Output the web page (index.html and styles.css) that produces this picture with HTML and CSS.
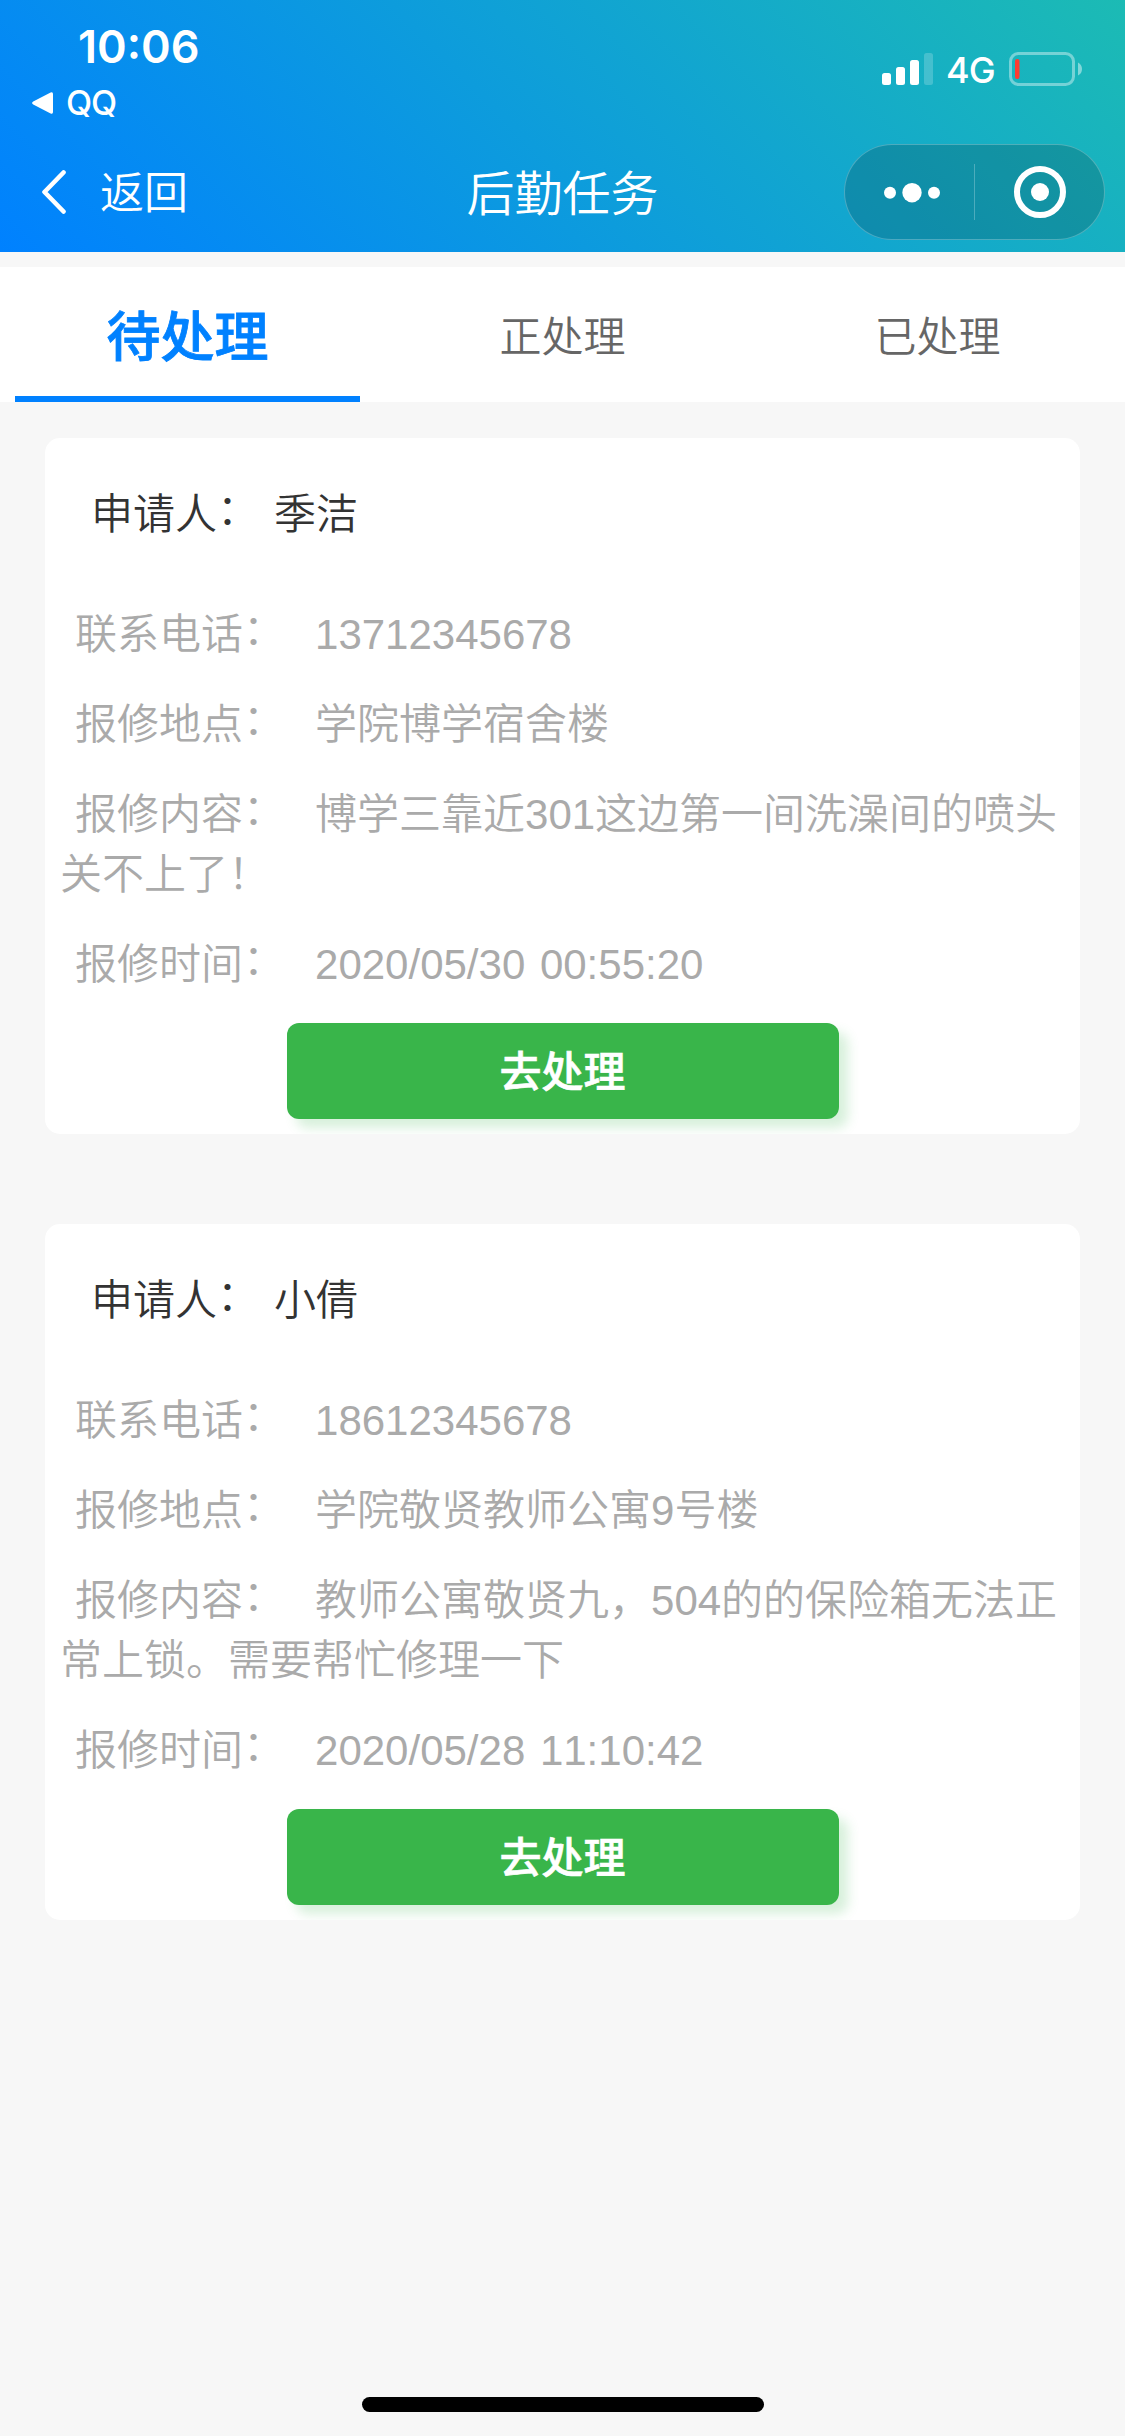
FILE: index.html
```html
<!DOCTYPE html>
<html lang="zh-CN">
<head>
<meta charset="utf-8">
<title>后勤任务</title>
<link rel="stylesheet" href="styles.css">
</head>
<body>
<div class="page">
  <header class="header">
    <div class="status">
      <div class="status-left">
        <div class="time">10:06</div>
        <div class="return-app">
          <svg width="21" height="22" viewBox="0 0 21 22"><path d="M1.2 9.600 18.600.6Q21-.4 21 2v18q0 2.400-2.400 1.400L1.200 12.400q-2.200-1.400 0-2.800z" fill="#fff"/></svg>
          <span class="app-name">QQ</span>
        </div>
      </div>
      <div class="status-right">
        <svg class="signal" width="51" height="34" viewBox="0 0 51 34" fill="#fff"><rect y="21" width="9" height="12" rx="2.500"/><rect x="14" y="15" width="9" height="18" rx="2.500"/><rect x="28" y="8" width="9" height="25" rx="2.500"/><rect x="42" y="1" width="9" height="32" rx="2.500" opacity=".2"/></svg>
        <span class="network">4G</span>
        <svg class="battery" width="74" height="34" viewBox="0 0 74 34"><rect x="1.500" y="1.500" width="63" height="31" rx="8" fill="none" stroke="#fff" stroke-opacity=".4" stroke-width="3"/><path d="M69 10.500q4 2 4 6.500t-4 6.500z" fill="#fff" opacity=".45"/><rect x="6" y="7" width="4.500" height="20" rx="2" fill="#ff3b30"/></svg>
      </div>
    </div>
    <nav class="nav">
      <a class="back">
        <svg width="26" height="44" viewBox="0 0 26 44"><path d="M22.500 2.500 3.500 22l19 19.500" fill="none" stroke="#fff" stroke-width="4.600" stroke-linecap="round" stroke-linejoin="round"/></svg>
        <span class="back-text">返回</span>
      </a>
      <h1 class="title">后勤任务</h1>
      <div class="nav-right">
        <div class="capsule">
          <svg width="259" height="94" viewBox="0 0 259 94"><g fill="#fff"><circle cx="45" cy="47.700" r="6"/><circle cx="67" cy="47.700" r="9.700"/><circle cx="89" cy="47.700" r="6"/><circle cx="195" cy="47" r="9"/></g><path d="M129.500 19v56" stroke="#fff" stroke-opacity=".25"/><circle cx="195" cy="47" r="23" fill="none" stroke="#fff" stroke-width="6"/></svg>
        </div>
      </div>
    </nav>
  </header>

  <div class="tabs">
    <div class="tab tab-active">待处理</div>
    <div class="tab">正处理</div>
    <div class="tab">已处理</div>
  </div>

  <main class="list">
    <section class="card">
      <div class="applicant"><span>申请人<span class="colon">：</span></span><span>季洁</span></div>
      <p class="row"><span class="label">联系电话<span class="colon">：</span></span>13712345678</p>
      <p class="row"><span class="label">报修地点<span class="colon">：</span></span>学院博学宿舍楼</p>
      <p class="row"><span class="label">报修内容<span class="colon">：</span></span>博学三靠近301这边第一间洗澡间的喷头关不上了！</p>
      <p class="row"><span class="label">报修时间<span class="colon">：</span></span>2020/05/30 00:55:20</p>
      <button class="action">去处理</button>
    </section>
    <section class="card">
      <div class="applicant"><span>申请人<span class="colon">：</span></span><span>小倩</span></div>
      <p class="row"><span class="label">联系电话<span class="colon">：</span></span>18612345678</p>
      <p class="row"><span class="label">报修地点<span class="colon">：</span></span>学院敬贤教师公寓9号楼</p>
      <p class="row"><span class="label">报修内容<span class="colon">：</span></span>教师公寓敬贤九，504的的保险箱无法正常上锁。需要帮忙修理一下</p>
      <p class="row"><span class="label">报修时间<span class="colon">：</span></span>2020/05/28 11:10:42</p>
      <button class="action">去处理</button>
    </section>
  </main>
  <div class="home-bar"></div>
</div>
</body>
</html>
```
FILE: styles.css
```css
* { box-sizing: border-box; margin: 0; padding: 0; }

body {
  background: #f7f7f7;
  font-family: "Liberation Sans", "Noto Sans CJK SC", sans-serif;
  font-size: 42px;
  font-weight: 350;
  font-kerning: none;
  color: #333;
}

svg { display: block; }

.page {
  width: 1125px;
  height: 2436px;
  display: flex;
  flex-direction: column;
  overflow: hidden;
}

.header {
  height: 252px;
  flex: none;
  background: linear-gradient(45deg, #0081ff, #1cbbb4);
  color: #fff;
}

.status {
  height: 132px;
  display: flex;
  justify-content: space-between;
  font-family: Inter, sans-serif;
}

.status-left { padding: 22px 0 0 32px; }
.time {
  padding-left: 46px;
  font-size: 45px;
  font-weight: 600;
  line-height: 50px;
}
.return-app {
  display: flex;
  align-items: center;
  gap: 13px;
  margin-top: 11px;
  line-height: 40px;
}
.app-name { font-size: 34px; font-weight: 450; letter-spacing: -1.2px; }

.status-right {
  display: flex;
  align-items: flex-start;
  padding: 52px 42px 0 0;
}
.network {
  width: 49px;
  margin: 0 14px 0 13px;
  font-size: 36px;
  font-weight: 450;
  line-height: 37px;
  letter-spacing: -1px;
}

.nav {
  height: 120px;
  display: grid;
  grid-template-columns: 1fr auto 1fr;
  align-items: center;
}
.back {
  display: flex;
  align-items: center;
  gap: 33px;
  padding-left: 41px;
  font-size: 44px;
  line-height: 60px;
}
.back-text { padding-top: 3px; }
.title {
  padding-top: 6px;
  font-size: 48px;
  font-weight: 350;
  line-height: 60px;
}
.nav-right { display: flex; justify-content: flex-end; padding-right: 20px; }
.capsule {
  width: 261px;
  height: 96px;
  border: 1px solid rgba(255, 255, 255, .25);
  border-radius: 48px;
  background: rgba(0, 0, 0, .16);
}

.tabs {
  display: grid;
  grid-template: 135px / repeat(3, 1fr);
  flex: none;
  height: 135px;
  margin-top: 15px;
  background: #fff;
}
.tab {
  height: 135px;
  margin: 0 15px;
  padding-top: 5px;
  line-height: 132px;
  text-align: center;
  color: #666;
}
.tab-active {
  border-bottom: 6px solid #0081ff;
  color: #0081ff;
  font-size: 54px;
  font-weight: 500;
  -webkit-text-stroke: .8px #0081ff;
}

.list {
  flex: 1;
  display: flex;
  flex-direction: column;
  gap: 90px;
  padding: 36px 45px 0;
}
.card {
  height: 696px;
  padding: 0 15px;
  border-radius: 15px;
  background: #fff;
  overflow: hidden;
}
.applicant {
  display: flex;
  gap: 15px;
  height: 153px;
  padding: 2px 0 0 31px;
  line-height: 150px;
}
.row {
  margin-top: 30px;
  line-height: 60px;
  color: #aaa;
  word-spacing: 3px;
}
.applicant + .row { margin-top: 14px; }
.label { margin: 0 30px 0 15px; }
.colon { line-height: 1; vertical-align: 4px; }

.action {
  display: block;
  width: 552px;
  height: 96px;
  margin: 28px auto 0;
  padding-top: 3px;
  border: 0;
  border-radius: 12px;
  background: #39b54a;
  box-shadow: 9px 9px 12px rgba(57, 181, 74, .2);
  color: #fff;
  font: 500 42px/93px "Liberation Sans", "Noto Sans CJK SC", sans-serif;
  -webkit-text-stroke: .6px #fff;
}

.home-bar {
  flex: none;
  width: 402px;
  height: 15px;
  margin: 0 auto 24px;
  border-radius: 8px;
  background: #000;
}
```
